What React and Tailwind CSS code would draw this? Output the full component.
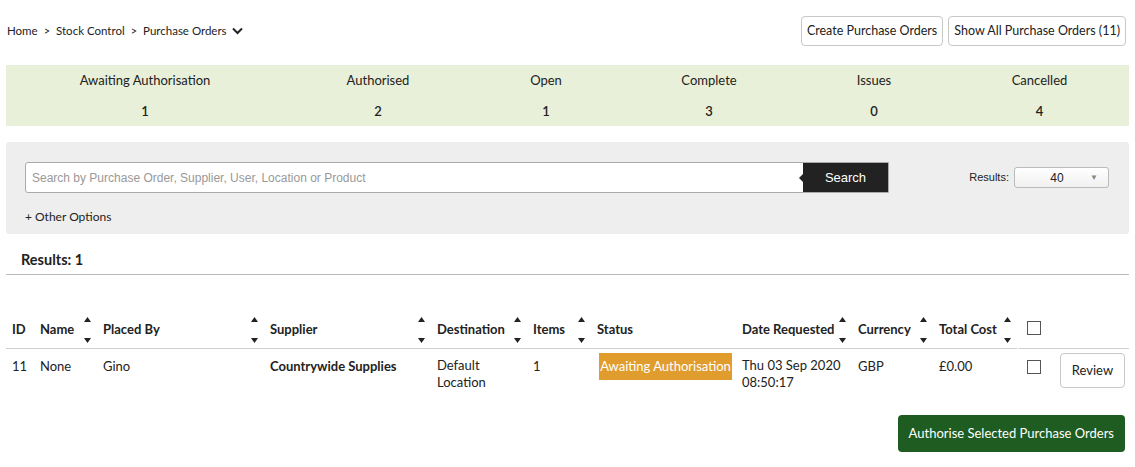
import React from "react";

const stats = [
  { label: "Awaiting Authorisation", value: 1 },
  { label: "Authorised", value: 2 },
  { label: "Open", value: 1 },
  { label: "Complete", value: 3 },
  { label: "Issues", value: 0 },
  { label: "Cancelled", value: 4 },
];

function SortIcon() {
  return (
    <span className="inline-flex h-[26px] w-[7px] flex-col justify-between text-[#222]">
      <svg width="7" height="5" viewBox="0 0 7 5">
        <path d="M3.5 0L7 5H0z" fill="currentColor" />
      </svg>
      <svg width="7" height="5" viewBox="0 0 7 5">
        <path d="M0 0h7L3.5 5z" fill="currentColor" />
      </svg>
    </span>
  );
}

function Th({ label, sort = false }) {
  return (
    <th className="border-b border-[#cfcfcf] px-[6px] py-0 text-left align-middle font-bold">
      <div className="flex h-[36px] items-center justify-between">
        <span>{label}</span>
        {sort && <SortIcon />}
      </div>
    </th>
  );
}

function Checkbox() {
  return <span className="block h-[14px] w-[14px] border border-[#555] bg-white" />;
}

export default function App() {
  return (
    <div className="min-h-[467px] bg-white px-[6px] text-[13px] text-[#222]" style={{ fontFamily: "Lato, 'Liberation Sans', sans-serif" }}>
      {/* Breadcrumb + actions */}
      <div className="flex items-center justify-between pt-[16px]">
        <div className="flex items-center pl-[1px] text-[11.5px] text-[#222]">
          <span>Home</span>
          <span className="mx-[6px] text-[11px]">&gt;</span>
          <span>Stock Control</span>
          <span className="mx-[6px] text-[11px]">&gt;</span>
          <span>Purchase Orders</span>
          <svg className="ml-[5px]" width="11" height="8" viewBox="0 0 11 8">
            <path d="M1 1.5l4.5 4.5L10 1.5" stroke="#222" strokeWidth="2" fill="none" />
          </svg>
        </div>
        <div className="flex gap-[5px] pr-[3px]">
          <button className="h-[30px] rounded-[4px] border border-[#c8c8c8] bg-white px-[5px] text-[12.5px] text-[#222]">
            Create Purchase Orders
          </button>
          <button className="h-[30px] rounded-[4px] border border-[#c8c8c8] bg-white px-[5px] text-[12.5px] text-[#222]">
            Show All Purchase Orders (11)
          </button>
        </div>
      </div>

      {/* Status summary */}
      <div className="mt-[19px] grid h-[61px] grid-cols-[278px_188px_148px_178px_152px_1fr] bg-[#e8f0d9]">
        {stats.map((s) => (
          <div key={s.label} className="flex flex-col items-center pt-[7px]">
            <span className="leading-[17px]">{s.label}</span>
            <span className="mt-[14px] font-semibold leading-[17px]">{s.value}</span>
          </div>
        ))}
      </div>

      {/* Search panel */}
      <div className="mt-[16px] h-[92px] rounded-[3px] bg-[#eeeeee] px-[19px] pt-[20px]">
        <div className="flex items-start">
          <div className="flex h-[31px] w-[864px] items-stretch rounded-l-[3px] border border-[#aaa] bg-white" style={{ fontFamily: "'Liberation Sans', Arial, sans-serif" }}>
            <div className="flex flex-1 items-center pl-[6px] text-[12px] text-[#999]">
              Search by Purchase Order, Supplier, User, Location or Product
            </div>
            <div className="relative flex w-[85px] items-center justify-center bg-[#222] text-[13px] text-white">
              <span className="absolute left-[-4px] top-1/2 h-0 w-0 -translate-y-1/2 border-y-[5px] border-r-[5px] border-y-transparent border-r-[#222]" />
              Search
            </div>
          </div>
          <div className="ml-auto mr-[1px] mt-[5px] flex items-center text-[11px]" style={{ fontFamily: "'Liberation Sans', Arial, sans-serif" }}>
            <span className="mr-[5px]">Results:</span>
            <div className="relative flex h-[21px] w-[95px] items-center justify-center rounded-[3px] border border-[#bbb] bg-gradient-to-b from-white to-[#f0f0f0] text-[12px]">
              <span className="-ml-[9px]">40</span>
              <span className="absolute right-[10px] text-[8px] text-[#888]">▼</span>
            </div>
          </div>
        </div>
        <div className="mt-[15px] text-[12px]">+ Other Options</div>
      </div>

      {/* Results heading */}
      <div className="mt-[15px] border-b border-[#bbb] pb-[3px] pl-[15px] text-[14.5px] font-bold">Results: 1</div>

      {/* Table */}
      <table className="mt-[37px] w-[1123px] table-fixed border-separate border-spacing-0">
        <colgroup>
          <col className="w-[28px]" />
          <col className="w-[63px]" />
          <col className="w-[167px]" />
          <col className="w-[167px]" />
          <col className="w-[96px]" />
          <col className="w-[64px]" />
          <col className="w-[145px]" />
          <col className="w-[116px]" />
          <col className="w-[81px]" />
          <col className="w-[84px]" />
          <col className="w-[37px]" />
          <col />
        </colgroup>
        <thead>
          <tr>
            <Th label="ID" />
            <Th label="Name" sort />
            <Th label="Placed By" sort />
            <Th label="Supplier" sort />
            <Th label="Destination" sort />
            <Th label="Items" sort />
            <Th label="Status" />
            <Th label="Date Requested" sort />
            <Th label="Currency" sort />
            <Th label="Total Cost" sort />
            <th className="border-b border-l-[3px] border-[#cfcfcf] border-l-white px-0 align-middle">
              <div className="flex h-[36px] items-center pb-[4px] pl-[7px]">
                <Checkbox />
              </div>
            </th>
            <th className="border-b border-[#cfcfcf]" />
          </tr>
        </thead>
        <tbody>
          <tr className="align-top">
            <td className="px-[6px] pt-[8px]">11</td>
            <td className="px-[6px] pt-[8px]">None</td>
            <td className="px-[6px] pt-[8px]">Gino</td>
            <td className="px-[6px] pt-[8px] font-bold">Countrywide Supplies</td>
            <td className="px-[6px] pt-[8px] leading-[17px]">
              Default
              <br />
              Location
            </td>
            <td className="px-[6px] pt-[8px]">1</td>
            <td className="pl-[8px] pt-[4px]">
              <div className="flex h-[27px] w-[133px] items-center justify-center bg-[#e09c2c] text-white">
                Awaiting Authorisation
              </div>
            </td>
            <td className="px-[6px] pt-[8px] leading-[17px]">
              Thu 03 Sep 2020
              <br />
              08:50:17
            </td>
            <td className="px-[6px] pt-[8px]">GBP</td>
            <td className="px-[6px] pt-[8px]">£0.00</td>
            <td className="pl-[10px] pt-[11px]">
              <Checkbox />
            </td>
            <td className="pl-[6px] pt-[4px]">
              <button className="block h-[35px] w-[65px] rounded-[4px] border border-[#c8c8c8] bg-white text-[13px]">
                Review
              </button>
            </td>
          </tr>
        </tbody>
      </table>

      <div className="mt-[24px] flex justify-end pr-[4px]">
        <button className="h-[37px] rounded-[4px] bg-[#1e5c22] px-[11px] text-[13px] text-white">
          Authorise Selected Purchase Orders
        </button>
      </div>
    </div>
  );
}
